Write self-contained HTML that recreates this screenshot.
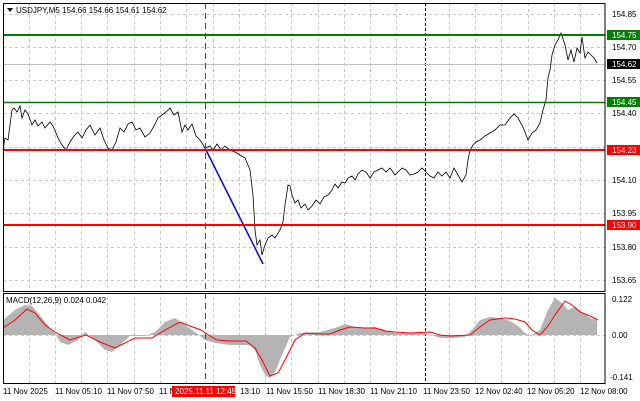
<!DOCTYPE html>
<html><head><style>
body{margin:0;background:#fff;width:640px;height:401px;overflow:hidden;font-family:"Liberation Sans",sans-serif}
svg{display:block}
text{font-family:"Liberation Sans",sans-serif;font-size:8px;fill:#000}
</style></head><body>
<svg width="640" height="401" viewBox="0 0 640 401">
<rect width="640" height="401" fill="#fff"/>
<g stroke="#c8c8c8" stroke-width="1" stroke-dasharray="3,3">
<line x1="3" x2="605" y1="14.5" y2="14.5"/><line x1="3" x2="605" y1="47.5" y2="47.5"/><line x1="3" x2="605" y1="80.5" y2="80.5"/><line x1="3" x2="605" y1="113.5" y2="113.5"/><line x1="3" x2="605" y1="147.5" y2="147.5"/><line x1="3" x2="605" y1="180.5" y2="180.5"/><line x1="3" x2="605" y1="213.5" y2="213.5"/><line x1="3" x2="605" y1="247.5" y2="247.5"/><line x1="3" x2="605" y1="280.5" y2="280.5"/>
<line x1="3" x2="605" y1="335.5" y2="335.5"/>
<g id="v">
<line x1="29.5" x2="29.5" y1="3" y2="384"/><line x1="55.5" x2="55.5" y1="3" y2="384"/><line x1="81.5" x2="81.5" y1="3" y2="384"/><line x1="107.5" x2="107.5" y1="3" y2="384"/><line x1="134.5" x2="134.5" y1="3" y2="384"/><line x1="160.5" x2="160.5" y1="3" y2="384"/><line x1="186.5" x2="186.5" y1="3" y2="384"/><line x1="213.5" x2="213.5" y1="3" y2="384"/><line x1="239.5" x2="239.5" y1="3" y2="384"/><line x1="265.5" x2="265.5" y1="3" y2="384"/><line x1="291.5" x2="291.5" y1="3" y2="384"/><line x1="318.5" x2="318.5" y1="3" y2="384"/><line x1="344.5" x2="344.5" y1="3" y2="384"/><line x1="370.5" x2="370.5" y1="3" y2="384"/><line x1="396.5" x2="396.5" y1="3" y2="384"/><line x1="449.5" x2="449.5" y1="3" y2="384"/><line x1="475.5" x2="475.5" y1="3" y2="384"/><line x1="501.5" x2="501.5" y1="3" y2="384"/><line x1="528.5" x2="528.5" y1="3" y2="384"/><line x1="554.5" x2="554.5" y1="3" y2="384"/><line x1="580.5" x2="580.5" y1="3" y2="384"/>
</g></g>
<line x1="425.5" x2="425.5" y1="3" y2="384" stroke="#000" stroke-dasharray="3,2"/>
<line x1="3" x2="605" y1="64.5" y2="64.5" stroke="#c0c0c0"/>
<!-- MACD histogram -->
<path fill="#b4b4b4" d="M3,335 L3,320 L15,310 L25,305 L32,306 L42,318 L50,328 L55,333 L60,342 L68,345 L78,340 L85,332 L95,340 L105,350 L112,352 L120,345 L130,336 L145,336 L155,332 L165,322 L175,318 L185,325 L195,332 L205,340 L215,343 L230,345 L250,345 L255,350 L260,365 L265,375 L270,378 L275,372 L282,355 L290,337 L300,333 L320,332 L335,328 L345,324 L355,327 L365,328 L375,327 L385,330 L395,333 L410,333 L425,333 L440,338 L455,338 L465,337 L472,330 L480,320 L490,317 L500,318 L510,321 L518,326 L525,333 L530,336 L540,330 L548,310 L555,298 L562,303 L568,310 L575,307 L582,312 L590,318 L597,320 L597,335 Z"/>
<polyline fill="none" stroke="#ff0000" stroke-width="1" points="3,328 15,320 27,309 35,313 45,325 55,332 70,340 86,335 100,342 115,348 125,343 135,338 152,338 165,330 180,322 190,326 201,330 210,336 217,340 230,341 246,341 255,348 262,360 270,376 278,373 285,360 295,340 305,333 320,334 330,334 340,330 350,327 365,328 375,328 385,331 395,332 410,333 430,332 440,335 450,336 470,335 480,327 490,320 505,318 515,319 525,322 532,330 540,335 548,326 555,315 565,301 572,305 580,312 590,316 598,320"/>
<!-- price line -->
<polyline fill="none" stroke="#000" stroke-width="0.8" points="3,150 5,138 8,140 10,125 12,110 14,108 17,112 20,106 22,118 25,110 28,114 32,125 35,120 38,126 42,122 45,128 50,122 53,126 58,138 62,145 66,150 70,142 74,136 78,132 82,138 86,130 90,125 95,135 100,128 104,140 108,148 112,150 116,142 120,128 124,132 128,124 132,122 136,130 140,128 145,137 150,133 154,126 158,118 162,115 166,112 170,108 174,115 178,112 182,132 185,125 188,130 192,124 196,136 200,140 205,148 210,146 213,150 217,144 221,150 225,146 230,150 235,152 240,155 245,158 250,170 253,195 255,230 257,245 260,240 262,255 265,245 268,238 272,235 275,238 280,230 283,222 285,205 288,185 290,186 292,195 295,203 298,200 301,208 305,204 308,210 312,206 316,200 320,204 324,197 328,195 332,190 335,184 338,188 342,182 345,183 348,178 352,176 355,180 358,174 362,170 366,172 370,178 374,172 378,170 382,168 386,172 390,168 395,175 398,172 402,168 406,170 410,175 414,174 418,172 422,168 426,172 430,176 434,178 438,172 442,176 446,172 450,178 454,168 458,175 462,182 466,175 468,160 470,150 473,145 476,142 480,140 485,136 490,133 495,130 500,125 505,125 510,118 514,114 518,118 522,125 525,132 528,140 532,133 536,130 540,123 543,110 546,100 548,78 550,70 552,55 555,45 558,40 561,33 565,45 568,60 571,50 574,62 577,48 580,53 582,37 585,58 588,52 591,55 594,58 597,63"/>
<line x1="205" y1="148" x2="263" y2="264" stroke="#0000ff" stroke-width="1.5"/>
<line x1="205.5" x2="205.5" y1="3" y2="384" stroke="#ff0000" stroke-dasharray="6,4"/>
<!-- levels -->
<line x1="3" x2="605" y1="35" y2="35" stroke="#008000" stroke-width="2"/>
<line x1="3" x2="605" y1="102.5" y2="102.5" stroke="#008000" stroke-width="1.5"/>
<line x1="3" x2="605" y1="150" y2="150" stroke="#ff0000" stroke-width="2"/>
<line x1="3" x2="605" y1="225" y2="225" stroke="#ff0000" stroke-width="2"/>
<!-- frames -->
<rect x="3.5" y="3.5" width="601.5" height="288" fill="none" stroke="#000" stroke-width="1"/>
<rect x="3.5" y="293.5" width="601.5" height="90" fill="none" stroke="#000" stroke-width="1"/>
<polygon points="7,8 13,8 10,12" fill="#000"/>
<text x="16" y="13">USDJPY,M5  154.66 154.66 154.61 154.62</text>
<text x="6" y="303" font-size="7.5">MACD(12,26,9) 0.024 0.042</text>
<!-- price axis -->
<g>
<text x="612" y="17">154.85</text>
<rect x="607" y="30" width="33" height="10" fill="#008000"/><text x="612" y="38" style="fill:#fff">154.75</text>
<text x="612" y="50">154.70</text>
<rect x="607" y="59" width="33" height="10" fill="#000"/><text x="612" y="67" style="fill:#fff">154.62</text>
<text x="612" y="83">154.55</text>
<rect x="607" y="97" width="33" height="10" fill="#008000"/><text x="612" y="105" style="fill:#fff">154.45</text>
<text x="612" y="116">154.40</text>
<rect x="607" y="145" width="33" height="10" fill="#ff0000"/><text x="612" y="153" style="fill:#fff">154.23</text>
<text x="612" y="183">154.10</text>
<text x="612" y="216">153.95</text>
<rect x="607" y="220" width="33" height="10" fill="#ff0000"/><text x="612" y="228" style="fill:#fff">153.90</text>
<text x="612" y="250">153.80</text>
<text x="612" y="283">153.65</text>
<text x="612" y="302">0.122</text>
<text x="612" y="338">0.00</text>
<text x="610" y="380">-0.141</text>
</g>
<!-- time axis -->
<g>
<text x="3" y="394">11 Nov 2025</text>
<text x="55" y="394">11 Nov 05:10</text>
<text x="107" y="394">11 Nov 07:50</text>
<text x="159" y="394">11 N</text>
<rect x="172" y="386" width="63" height="11" fill="#ff0000"/><text x="175" y="394" style="fill:#fff">2025.11.11 12:45</text>
<text x="240" y="394">13:10</text>
<text x="266" y="394">11 Nov 15:50</text>
<text x="318" y="394">11 Nov 18:30</text>
<text x="370" y="394">11 Nov 21:10</text>
<text x="423" y="394">11 Nov 23:50</text>
<text x="475" y="394">12 Nov 02:40</text>
<text x="527" y="394">12 Nov 05:20</text>
<text x="580" y="394">12 Nov 08:00</text>
</g>
</svg>
</body></html>
